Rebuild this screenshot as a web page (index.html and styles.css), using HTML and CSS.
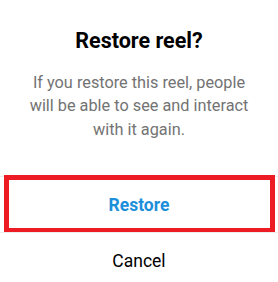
FILE: index.html
```html
<!DOCTYPE html>
<html lang="en">
<head>
<meta charset="utf-8">
<title>Restore reel?</title>
<link rel="stylesheet" href="styles.css">
</head>
<body>
<div class="dialog">
  <div class="header">
    <h1 class="title">Restore reel?</h1>
    <p class="message">If you restore this reel, people will be able to see and interact with it again.</p>
  </div>
  <div class="actions">
    <button class="action action-primary highlighted" type="button">Restore</button>
    <button class="action" type="button">Cancel</button>
  </div>
</div>
</body>
</html>
```
FILE: styles.css
```css
html, body {
  margin: 0;
  padding: 0;
  background: #ffffff;
}
body {
  font-family: Roboto, "Liberation Sans", Arial, sans-serif;
  width: 278px;
  height: 282px;
  overflow: hidden;
}
.dialog {
  display: flex;
  flex-direction: column;
}
.header {
  display: flex;
  flex-direction: column;
  align-items: center;
  padding: 27px 20px 0;
}
.title {
  margin: 0;
  font-size: 21.5px;
  font-weight: 700;
  line-height: 28px;
  color: #000000;
  text-align: center;
}
.message {
  margin: 16px 0 0;
  font-size: 16.3px;
  line-height: 23.4px;
  color: #737373;
  text-align: center;
}
.actions {
  display: flex;
  flex-direction: column;
  margin-top: 35px;
}
.action {
  position: relative;
  display: flex;
  align-items: center;
  justify-content: center;
  height: 56px;
  margin: 0;
  padding: 0;
  border: 0;
  border-top: 1px solid #ededed;
  background: transparent;
  font-family: inherit;
  font-size: 17.5px;
  font-weight: 400;
  color: #000000;
}
.action-primary {
  font-weight: 700;
  color: #1c8fdb;
}
.highlighted::after {
  content: "";
  position: absolute;
  top: -2px;
  bottom: -1px;
  left: 4px;
  right: 3px;
  border: 5px solid #ed1c24;
  pointer-events: none;
}
```
